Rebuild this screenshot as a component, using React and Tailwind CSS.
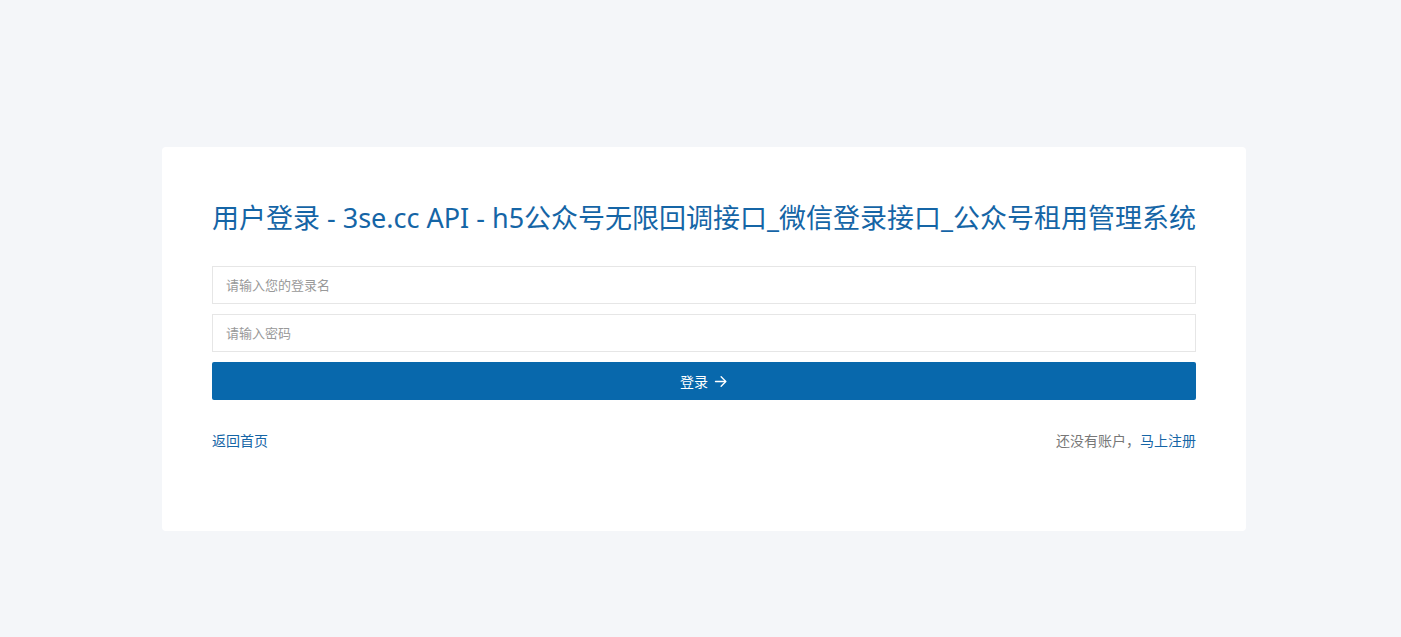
import React, { useState } from "react";

const font = {
  fontFamily: '"Noto Sans", "Noto Sans CJK SC", sans-serif',
};

export default function App() {
  const [username, setUsername] = useState("");
  const [password, setPassword] = useState("");

  return (
    <div
      className="min-h-screen w-full bg-[#f4f6f9] pt-[147px] pb-[107px]"
      style={font}
    >
      <div className="ml-[162px] w-[1084px] rounded-[4px] bg-white px-[50px] pt-[52px] pb-[80px]">
        {/* Title */}
        <h1 className="whitespace-nowrap text-[27px] leading-[38px] font-normal text-[#1565a6]">
          用户登录 - 3se.cc API - h5公众号无限回调接口_微信登录接口_公众号租用管理系统
        </h1>

        <form className="mt-[29px] flex flex-col gap-[10px]" onSubmit={(e) => e.preventDefault()}>
          <input
            type="text"
            value={username}
            onChange={(e) => setUsername(e.target.value)}
            placeholder="请输入您的登录名"
            className="h-[38px] w-full border border-[#e6e6e6] px-[13px] text-[13px] text-gray-700 placeholder:text-[#999] outline-none"
          />
          <input
            type="password"
            value={password}
            onChange={(e) => setPassword(e.target.value)}
            placeholder="请输入密码"
            className="h-[38px] w-full border border-[#e6e6e6] px-[13px] text-[13px] text-gray-700 placeholder:text-[#999] outline-none"
          />
          <button
            type="submit"
            className="flex h-[38px] w-full items-center justify-center gap-[5px] rounded-[2px] bg-[#0868ac] text-[14px] text-white"
          >
            登录
            <svg width="15" height="15" viewBox="0 0 24 24" fill="none" stroke="currentColor" strokeWidth="2.2" strokeLinecap="round" strokeLinejoin="round">
              <path d="M4 12h16" />
              <path d="M13 4.5l7.5 7.5-7.5 7.5" />
            </svg>
          </button>
        </form>

        {/* Links */}
        <div className="mt-[31px] flex items-center justify-between text-[14px] leading-[20px]">
          <a href="#" className="text-[#1565a6]">返回首页</a>
          <span className="text-[#777]">
            还没有账户，<a href="#" className="text-[#1565a6]">马上注册</a>
          </span>
        </div>
      </div>
    </div>
  );
}
